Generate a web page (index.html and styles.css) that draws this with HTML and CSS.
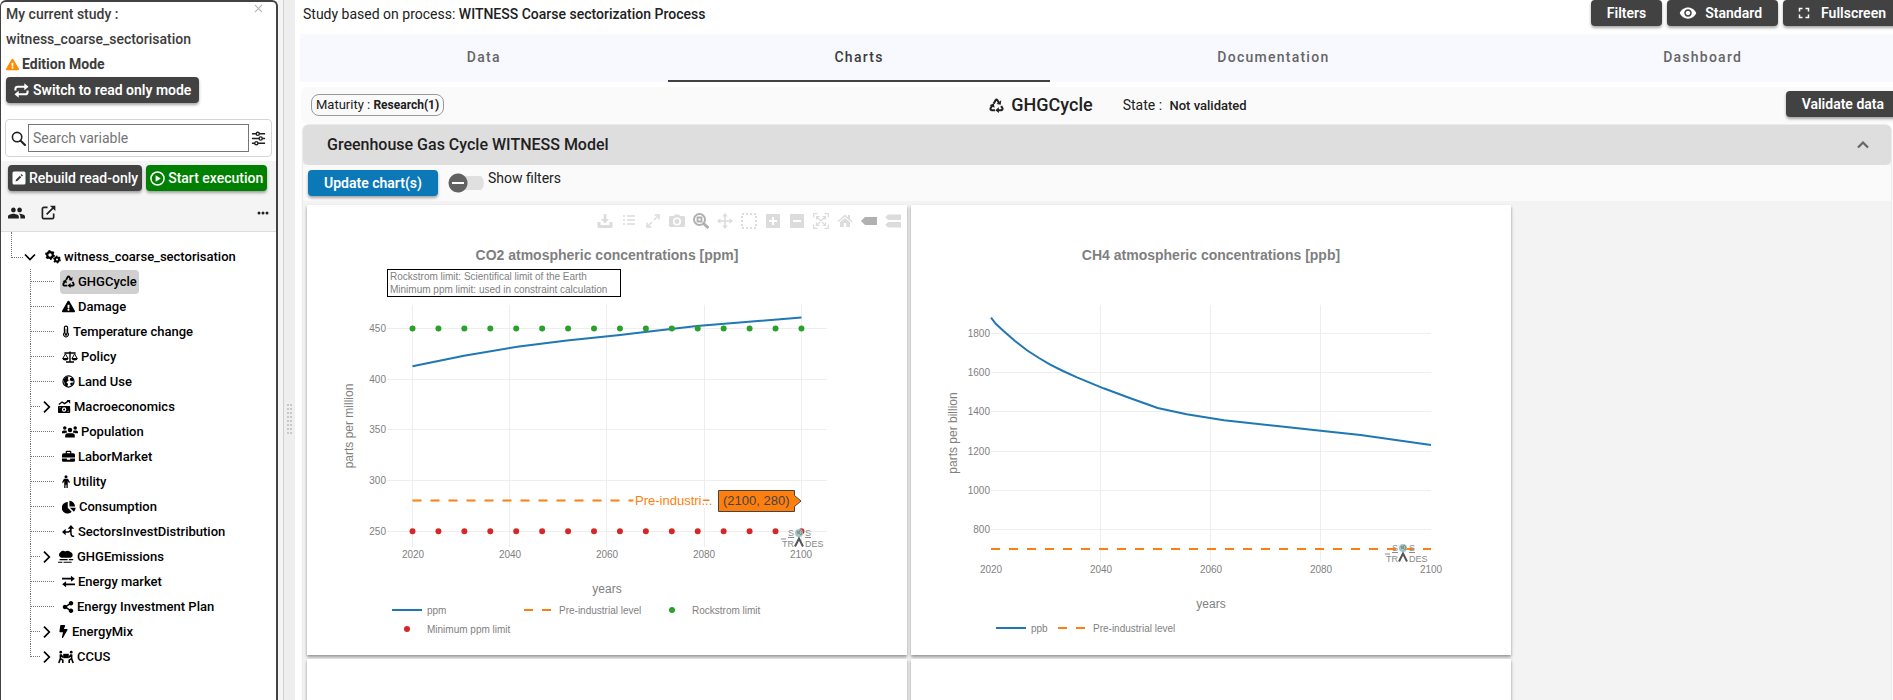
FILE: index.html
```html
<!DOCTYPE html>
<html lang="en">
<head>
<meta charset="utf-8">
<title>WITNESS Coarse sectorization Process</title>
<link rel="stylesheet" href="styles.css">
</head>
<body>
<svg class="defs" aria-hidden="true">
  <symbol id="warn" viewBox="0 0 576 512"><path d="M569.5 440C588 472 564.800 512 527.900 512H48c-36.900 0-60-40-41.500-72L246.400 24c18.500-32 64.700-32 83.200 0l239.900 416zM288 354c-25.400 0-46 20.600-46 46s20.600 46 46 46 46-20.600 46-46-20.600-46-46-46zm-43.700-165.300l7.400 136c.4 6.300 5.700 11.300 12 11.300h48.600c6.400 0 11.600-5 12-11.300l7.400-136c.4-6.900-5.100-12.700-12-12.700h-63.400c-6.900 0-12.400 5.800-12 12.700z"/></symbol>
  <symbol id="repeat" viewBox="0 0 16 16"><path d="M1.500 8V6.500a2.500 2.500 0 0 1 2.500-2.500h8M14.500 8v1.500a2.500 2.500 0 0 1-2.500 2.500H4" fill="none" stroke="currentColor" stroke-width="2.200"/><path d="M11 .2v7.600L15.500 4zM5 15.800V8.200L.5 12z"/></symbol>
  <symbol id="search" viewBox="0 0 16 16"><circle cx="6.500" cy="6.500" r="5" fill="none" stroke="currentColor" stroke-width="1.700"/><path d="M10.300 10.300l4.600 4.600" stroke="currentColor" stroke-width="2.200" stroke-linecap="round"/></symbol>
  <symbol id="sliders" viewBox="0 0 16 16"><g fill="none" stroke="currentColor" stroke-width="1.500"><path d="M1 3h4.500M9 3h6M1 8h7.500M12 8h3M1 13h3M7.500 13H15"/><circle cx="7.200" cy="3" r="1.700"/><circle cx="10.300" cy="8" r="1.700"/><circle cx="5.700" cy="13" r="1.700"/></g></symbol>
  <symbol id="edit" viewBox="0 0 14 14"><path fill-rule="evenodd" d="M2 .5h10A1.500 1.500 0 0 1 13.500 2v10a1.500 1.500 0 0 1-1.500 1.500H2A1.500 1.500 0 0 1 .5 12V2A1.500 1.500 0 0 1 2 .5zM3.500 10.500l2-.500 3.800-3.800-1.500-1.500L4 8.500zM8.500 4l1.500 1.500 1-1L9.500 3z"/></symbol>
  <symbol id="play" viewBox="0 0 16 16"><circle cx="8" cy="8" r="7" fill="none" stroke="currentColor" stroke-width="1.600"/><path d="M6 4.500v7L11.500 8z"/></symbol>
  <symbol id="group" viewBox="1 4 22 16"><path d="M16 11c1.660 0 3-1.340 3-3s-1.340-3-3-3-3 1.340-3 3 1.340 3 3 3zm-8 0c1.660 0 3-1.340 3-3S9.660 5 8 5 5 6.340 5 8s1.340 3 3 3zm0 2c-2.330 0-7 1.170-7 3.500V19h14v-2.500c0-2.330-4.670-3.500-7-3.500zm8 0c-.3 0-.6 0-1 .05 1.200.84 2 1.970 2 3.450V19h6v-2.500c0-2.330-4.670-3.500-7-3.500z"/></symbol>
  <symbol id="open" viewBox="0 0 16 16"><path d="M7 2.500H3A1.500 1.500 0 0 0 1.500 4v9A1.500 1.500 0 0 0 3 14.500h9a1.500 1.500 0 0 0 1.500-1.500V9M6 10l7.500-7.500" fill="none" stroke="currentColor" stroke-width="1.800"/><path d="M9.500.700h5.800v5.800z"/></symbol>
  <symbol id="dots" viewBox="0 0 12 4"><circle cx="2" cy="2" r="1.500"/><circle cx="6" cy="2" r="1.500"/><circle cx="10" cy="2" r="1.500"/></symbol>
  <symbol id="eye" viewBox="0 0 24 24"><path d="M12 4.500C7 4.500 2.730 7.610 1 12c1.730 4.390 6 7.500 11 7.500s9.270-3.110 11-7.500c-1.730-4.390-6-7.500-11-7.500zM12 17c-2.760 0-5-2.240-5-5s2.240-5 5-5 5 2.240 5 5-2.240 5-5 5zm0-8c-1.660 0-3 1.340-3 3s1.340 3 3 3 3-1.340 3-3-1.340-3-3-3z"/></symbol>
  <symbol id="full" viewBox="0 0 24 24"><path d="M7 14H5v5h5v-2H7v-3zm-2-4h2V7h3V5H5v5zm12 7h-3v2h5v-5h-2v3zM14 5v2h3v3h2V5h-5z"/></symbol>
  <symbol id="down" viewBox="0 0 12 12"><path d="M1 3.500l5 5 5-5" fill="none" stroke="currentColor" stroke-width="1.700"/></symbol>
  <symbol id="right" viewBox="0 0 12 12"><path d="M3 .700L8.300 6 3 11.300" fill="none" stroke="currentColor" stroke-width="1.700"/></symbol>
  <symbol id="up" viewBox="0 0 12 12"><path d="M1 8.500l5-5 5 5" fill="none" stroke="currentColor" stroke-width="2.200"/></symbol>
  <symbol id="gears" viewBox="0 0 16 14"><circle cx="5" cy="5" r="2.800" fill="none" stroke="currentColor" stroke-width="2.200"/><circle cx="5" cy="5" r="4.100" fill="none" stroke="currentColor" stroke-width="1.600" stroke-dasharray="2 2.290"/><circle cx="12" cy="9.500" r="2" fill="none" stroke="currentColor" stroke-width="2"/><circle cx="12" cy="9.500" r="3.200" fill="none" stroke="currentColor" stroke-width="1.400" stroke-dasharray="1.700 1.650"/></symbol>
  <symbol id="recycle" viewBox="0 0 16 16"><g fill="none" stroke="currentColor" stroke-width="2.200"><path d="M5 6l2-3.500q1-1.500 2 0L10.500 5"/><path d="M13 8.500l1.300 2.300q.7 1.900-1.300 2.200H9.500"/><path d="M6.500 13H3q-2-.3-1.300-2.200L3.500 8"/></g><path d="M8 6.300l4.500.9.500-4.700zM10.500 9.800V16L6.800 13zM.6 7.800l4.500-2.200.9 4.700z"/></symbol>
  <symbol id="thermo" viewBox="0 0 8 16"><path fill-rule="evenodd" d="M4 .5a2.700 2.700 0 0 1 2.700 2.700v6A3.600 3.600 0 1 1 1.300 9.200v-6A2.700 2.700 0 0 1 4 .5zM4 2a1.200 1.200 0 0 0-1.200 1.200V10a2.200 2.200 0 1 0 2.400 0V3.200A1.200 1.200 0 0 0 4 2z"/><circle cx="4" cy="11.700" r="1.500"/><path d="M3.500 4.500h1V12h-1z"/></symbol>
  <symbol id="balance" viewBox="0 0 20 16"><path d="M3 3h14M10 1v13M5 14.300h10" fill="none" stroke="currentColor" stroke-width="1.700"/><path d="M4.200 4L1 10h6.500zM15.800 4l-3.300 6H19z" fill="none" stroke="currentColor" stroke-width="1.200"/><path d="M.3 9.700h7.800q-.5 2.800-3.900 2.800T.3 9.700zM11.900 9.700h7.800q-.5 2.800-3.900 2.800t-3.900-2.800z"/></symbol>
  <symbol id="globe" viewBox="0 0 16 16"><circle cx="8" cy="8" r="6.800" fill="none" stroke="currentColor" stroke-width="1.500"/><path d="M2 5.500l4-4 2 1.500-1 2 1.500 1.500-3 2.500 2 2-1 3.500-3-2zM10 4l3-.5 1.500 3-2 1.500-3-1.500zM10 10l3-1 .5 2-2.500 2.500z"/></symbol>
  <symbol id="money" viewBox="0 0 16 16"><path d="M1 5.500l4-3 3 2 5-3.500" fill="none" stroke="currentColor" stroke-width="1.700"/><path d="M10.500 0H15v4.500z"/><path fill-rule="evenodd" d="M1 7.500h13q1 0 1 1V15q0 1-1 1H1q-1 0-1-1V8.500q0-1 1-1zM7.500 9a2.700 2.700 0 1 0 0 5.400 2.700 2.700 0 0 0 0-5.400zM2 9v1.500L3.500 9zM13 14.500V13l-1.500 1.500z"/><circle cx="7.500" cy="11.700" r="1.200"/></symbol>
  <symbol id="users" viewBox="0 0 20 16"><circle cx="10" cy="5.500" r="2.800"/><circle cx="3.500" cy="3" r="2.200"/><circle cx="16.500" cy="3" r="2.200"/><path d="M4 15v-2.500q0-3 3-3h6q3 0 3 3V15zM0 9.500V8q0-2 2-2h3.500l1 2.700Q4 9 3.600 9.500zM20 9.500V8q0-2-2-2h-3.500l-1 2.700q2.500.3 2.900.8z"/></symbol>
  <symbol id="toolbox" viewBox="0 0 16 16"><path fill-rule="evenodd" d="M4.500 4V2.500Q4.500 1 6 1h4q1.500 0 1.500 1.500V4H14q2 0 2 2v3.300H0V6q0-2 2-2zM6 4h4V2.500H6zM0 10.500h6V12h4v-1.500h6V13q0 1.500-1.500 1.500h-13Q0 14.500 0 13z"/></symbol>
  <symbol id="person" viewBox="0 0 10 16"><circle cx="5" cy="2" r="1.900"/><path d="M2.500 4.500h5L10 9l-1.300.8-1.500-2.300V16H5.600v-4H4.400v4H2.800V7.500L1.300 9.800 0 9z"/></symbol>
  <symbol id="pie" viewBox="0 0 17 16"><path d="M7 2v7l4.800 4.800A7 7 0 1 1 7 2zM9 .5A7 7 0 0 1 15.800 7.300H9zM9.500 9h7a7 7 0 0 1-2 4.700z"/></symbol>
  <symbol id="branch" viewBox="0 0 16 16"><path d="M3 8.500h5q3-.5 3-5M11 3v7q0 4 4 4" fill="none" stroke="currentColor" stroke-width="1.800"/><path d="M7 4.500L11 0l4 4.500zM4.500 4.500v8L0 8.500z"/></symbol>
  <symbol id="smog" viewBox="0 0 20 16"><path d="M4.500 9A3.700 3.700 0 0 1 3 2.200 4 4 0 0 1 9 1.200a4.500 4.500 0 0 1 6.500.600A3.800 3.800 0 0 1 16 9zM2 10.500h10v1.500H2zM13.500 10.500H19v1.500h-5.500zM0 13.800h5.500v1.500H0zM7 13.800h10v1.500H7z"/></symbol>
  <symbol id="swap" viewBox="0 0 16 16"><path d="M0 4.500h12M4 11.500h12" fill="none" stroke="currentColor" stroke-width="2"/><path d="M11 .8v7.400l4.800-3.700zM5 7.800v7.400L.2 11.500z"/></symbol>
  <symbol id="share" viewBox="0 0 448 512"><path d="M352 320c-22.600 0-43.400 7.800-59.800 20.900l-102.500-64a96.600 96.600 0 0 0 0-41.700l102.500-64.100C308.600 184.200 329.400 192 352 192c53 0 96-43 96-96S405 0 352 0s-96 43-96 96c0 7.200.8 14.100 2.300 20.800l-102.500 64.100C139.400 167.800 118.600 160 96 160c-53 0-96 43-96 96s43 96 96 96c22.600 0 43.400-7.800 59.800-20.900l102.500 64.100A96.300 96.300 0 0 0 256 416c0 53 43 96 96 96s96-43 96-96-43-96-96-96z"/></symbol>
  <symbol id="bolt" viewBox="0 0 320 512"><path d="M296 160H180.600l42.600-129.800C227.200 15 215.700 0 200 0H56C44 0 33.800 8.900 32.200 20.800l-32 240C-1.700 275.200 9.500 288 24 288h118.700L96.600 482.500c-3.600 15.200 8 29.500 23.300 29.500 8.400 0 16.400-4.400 20.800-12l176-304c9.300-15.900-2.200-36-20.700-36z"/></symbol>
  <symbol id="carry" viewBox="0 0 20 16"><circle cx="3.500" cy="2" r="1.700"/><circle cx="16.500" cy="2" r="1.700"/><path d="M6.500 4h7v5.500h-7z"/><path d="M3 4.500V10l-2 5.500M3 10l3 2v3.500M3.500 5l3 3.500M17 4.500V10l2 5.500M17 10l-3 2v3.500M16.500 5l-3 3.500" fill="none" stroke="currentColor" stroke-width="2"/></symbol>
</svg>

<div class="app">
  <aside class="sidebar">
    <section class="study">
      <button class="close" aria-label="Close study"><svg viewBox="0 0 10 10"><path d="M1 1l8 8M9 1L1 9" fill="none" stroke="currentColor" stroke-width="1.300"/></svg></button>
      <p>My current study :</p>
      <p>witness_coarse_sectorisation</p>
      <p class="mode"><svg class="i13 orange"><use href="#warn"/></svg>Edition Mode</p>
      <button class="btn switch"><svg class="i15"><use href="#repeat"/></svg>Switch to read only mode</button>
    </section>
    <div class="search">
      <svg class="i15"><use href="#search"/></svg>
      <input type="text" placeholder="Search variable" aria-label="Search variable">
      <button class="plain" aria-label="Search options"><svg class="i15"><use href="#sliders"/></svg></button>
    </div>
    <section class="tools">
      <div class="run">
        <button class="btn tight"><svg class="i14"><use href="#edit"/></svg>Rebuild read-only</button>
        <button class="btn tight green"><svg class="i15"><use href="#play"/></svg>Start execution</button>
      </div>
      <div class="actions">
        <button class="plain" aria-label="Users"><svg class="i17"><use href="#group"/></svg></button>
        <button class="plain" aria-label="Open in new window"><svg class="i15"><use href="#open"/></svg></button>
        <button class="plain last" aria-label="More"><svg class="more"><use href="#dots"/></svg></button>
      </div>
    </section>
    <nav class="tree" aria-label="Study tree">
      <div class="root"><button class="plain" aria-label="Collapse"><svg class="i12"><use href="#down"/></svg></button><a href="#"><svg class="i16"><use href="#gears"/></svg>witness_coarse_sectorisation</a></div>
      <ul>
        <li><a href="#" class="selected"><svg class="i13"><use href="#recycle"/></svg>GHGCycle</a></li>
        <li><a href="#"><svg class="i13"><use href="#warn"/></svg>Damage</a></li>
        <li><a href="#"><svg class="i8"><use href="#thermo"/></svg>Temperature change</a></li>
        <li><a href="#"><svg class="i16"><use href="#balance"/></svg>Policy</a></li>
        <li><a href="#"><svg class="i13"><use href="#globe"/></svg>Land Use</a></li>
        <li class="node"><button class="plain" aria-label="Expand"><svg class="i12"><use href="#right"/></svg></button><a href="#"><svg class="i13"><use href="#money"/></svg>Macroeconomics</a></li>
        <li><a href="#"><svg class="i16"><use href="#users"/></svg>Population</a></li>
        <li><a href="#"><svg class="i13"><use href="#toolbox"/></svg>LaborMarket</a></li>
        <li><a href="#"><svg class="i8"><use href="#person"/></svg>Utility</a></li>
        <li><a href="#"><svg class="i14"><use href="#pie"/></svg>Consumption</a></li>
        <li><a href="#"><svg class="i13"><use href="#branch"/></svg>SectorsInvestDistribution</a></li>
        <li class="node"><button class="plain" aria-label="Expand"><svg class="i12"><use href="#right"/></svg></button><a href="#"><svg class="i16"><use href="#smog"/></svg>GHGEmissions</a></li>
        <li><a href="#"><svg class="i13"><use href="#swap"/></svg>Energy market</a></li>
        <li><a href="#"><svg class="i12"><use href="#share"/></svg>Energy Investment Plan</a></li>
        <li class="node"><button class="plain" aria-label="Expand"><svg class="i12"><use href="#right"/></svg></button><a href="#"><svg class="i11"><use href="#bolt"/></svg>EnergyMix</a></li>
        <li class="node"><button class="plain" aria-label="Expand"><svg class="i12"><use href="#right"/></svg></button><a href="#"><svg class="i16"><use href="#carry"/></svg>CCUS</a></li>
      </ul>
    </nav>
  </aside>

  <div class="gutter"><div class="grip"></div></div>

  <main>
    <header class="top wide">
      <h1>Study based on process: <strong>WITNESS Coarse sectorization Process</strong></h1>
      <div class="top-buttons">
        <button class="btn roomy">Filters</button>
        <button class="btn icon"><svg class="i18"><use href="#eye"/></svg>Standard</button>
        <button class="btn icon"><svg class="i18"><use href="#full"/></svg>Fullscreen</button>
      </div>
    </header>
    <div class="tabs wide" role="tablist">
      <button role="tab">Data</button>
      <button role="tab" class="active" aria-selected="true">Charts</button>
      <button role="tab">Documentation</button>
      <button role="tab">Dashboard</button>
    </div>
    <div class="status wide">
      <span class="pill">Maturity : <strong>Research(1)</strong></span>
      <div class="name"><h2><svg class="i15"><use href="#recycle"/></svg>GHGCycle</h2><span class="state">State : <strong>Not validated</strong></span></div>
      <button class="btn roomy">Validate data</button>
    </div>
    <section class="panel">
      <div class="panel-head"><h3>Greenhouse Gas Cycle WITNESS Model</h3><button class="plain" aria-label="Collapse panel"><svg class="i12"><use href="#up"/></svg></button></div>
      <div class="panel-bar">
        <button class="btn blue roomy">Update chart(s)</button>
        <label class="toggle"><input type="checkbox">Show filters</label>
      </div>
      <div class="charts">
        <article class="card">
          <div class="modebar">
            <button aria-label="Download data"><svg viewBox="0 0 16 16"><path d="M2 9v4.500h12V9" fill="none" stroke="currentColor" stroke-width="3" stroke-linejoin="round"/><path d="M6.700 1h2.600v5H12l-4 4.500L4 6h2.700z"/></svg></button>
            <button aria-label="Legend"><svg viewBox="0 0 16 16"><path d="M2 3h2M2 7h2M2 11h2M6 3h8M6 7h8M6 11h8" fill="none" stroke="currentColor" stroke-width="1.500"/></svg></button>
            <button aria-label="Expand"><svg viewBox="0 0 16 16"><path d="M9 7l5-5M7 9l-5 5M9.500 2H14v4.500M2 9.500V14h4.500" fill="none" stroke="currentColor" stroke-width="1.500"/></svg></button>
            <button aria-label="Snapshot"><svg viewBox="0 0 16 16"><path fill-rule="evenodd" d="M5 3l1-1.500h4L11 3h3.500Q16 3 16 4.500v8q0 1.500-1.500 1.500h-13Q0 14 0 12.500v-8Q0 3 1.500 3zM8 4.500a4 4 0 1 0 0 8 4 4 0 0 0 0-8z"/><circle cx="8" cy="8.500" r="2.400"/></svg></button>
            <button aria-label="Zoom" class="on"><svg viewBox="0 0 16 16"><circle cx="6.500" cy="6.500" r="5.500" fill="none" stroke="currentColor" stroke-width="2"/><path d="M4.500 4.500h4v4h-4z" fill="none" stroke="currentColor" stroke-width="1.800"/><path d="M10.500 10.500l5 4.500" stroke="currentColor" stroke-width="3"/></svg></button>
            <button aria-label="Pan"><svg viewBox="0 0 16 16"><path d="M8 2v12M2 8h12" stroke="currentColor" stroke-width="1.600"/><path d="M8 0l2.800 3.500H5.200zM8 16l2.800-3.500H5.200zM0 8l3.500-2.800v5.600zM16 8l-3.500-2.800v5.600z"/></svg></button>
            <button aria-label="Box select"><svg viewBox="0 0 16 16"><path d="M1 1h14v14H1z" fill="none" stroke="currentColor" stroke-width="2" stroke-dasharray="2 2"/></svg></button>
            <button aria-label="Zoom in"><svg viewBox="0 0 16 16"><path fill-rule="evenodd" d="M1 1h14v14H1zM7 4v3H4v2h3v3h2V9h3V7H9V4z"/></svg></button>
            <button aria-label="Zoom out"><svg viewBox="0 0 16 16"><path fill-rule="evenodd" d="M1 1h14v14H1zM4 7v2h8V7z"/></svg></button>
            <button aria-label="Autoscale"><svg viewBox="0 0 16 16"><path d="M.7 4.500V.7h3.800M11.500.7h3.800v3.800M15.300 11.500v3.800h-3.800M4.500 15.300H.7v-3.800M4 4l8 8M12 4l-8 8M3.500 6.500v-3h3M9.500 3.500h3v3M12.500 9.500v3h-3M6.500 12.500h-3v-3" fill="none" stroke="currentColor" stroke-width="1.200"/></svg></button>
            <button aria-label="Reset axes"><svg viewBox="0 0 16 16"><path d="M8 1.500l3 2.700V2h2v4l2.500 2.200-1 1L8 3.500 1.500 9.200l-1-1zM8 5l5 4.300V14H9.300v-4H6.700v4H3V9.300z"/></svg></button>
            <button aria-label="Closest data" class="on"><svg viewBox="0 0 16 16"><path d="M4 4h12v8H4L0 8z"/></svg></button>
            <button aria-label="Compare data"><svg viewBox="0 0 16 16"><path d="M3 1.500h13v5.500H3L.3 4.200zM3 9h13v5.500H3L.3 11.800z"/></svg></button>
          </div>
          <svg class="plot" viewBox="0 0 600 450" role="img" aria-label="CO2 atmospheric concentrations">
            <text class="title" x="300" y="55">CO2 atmospheric concentrations [ppm]</text>
            <rect x="80.500" y="64.500" width="233" height="27" fill="#fff" stroke="#000"/>
            <text x="83" y="75">Rockstrom limit: Scientifical limit of the Earth</text>
            <text x="83" y="88">Minimum ppm limit: used in constraint calculation</text>
            <path class="grid" d="M105.500 100v242M202.500 100v242M299.500 100v242M397.500 100v242M494.500 100v242M80 123.500h440M80 174.500h440M80 224.500h440M80 275.500h440M80 326.500h440"/>
            <g class="yt"><text x="79" y="127">450</text><text x="79" y="178">400</text><text x="79" y="228">350</text><text x="79" y="279">300</text><text x="79" y="330">250</text></g>
            <g class="xt"><text x="106" y="353">2020</text><text x="203" y="353">2040</text><text x="300" y="353">2060</text><text x="397" y="353">2080</text><text x="494" y="353">2100</text><text class="axis" x="300" y="388">years</text><text class="axis" transform="translate(46 221) rotate(-90)">parts per million</text></g>
            <path class="blue-line" d="M105.500 161.300L157 150.700 212 141.500 260 135.500 313 130 338 127 390 121 494.500 112.500"/>
            <path class="orange-line" d="M105.500 295.500H494.500"/>
            <path class="dot-line green-dots" d="M105.500 123.500H495"/>
            <path class="dot-line red-dots" d="M105.500 326.300H495"/>
            <text class="hover-name" x="328" y="300">Pre-industri...</text>
            <path d="M411.500 285.500h76v5l6.500 5.500-6.500 5.500v5h-76z" fill="#ff7f0e" stroke="#444"/>
            <text class="hover-value" x="416" y="300">(2100, 280)</text>
            <g class="logo" transform="translate(474 323)"><circle cx="18" cy="5" r="4"/><path class="lines" d="M16 3l2 1-1 2zM19 2l2 2-1 3-2-2zM7 9.500h6M24 9.500h6M0 11h5"/><path class="mast" d="M14 18.500l4-8 4 8"/><text x="7" y="8">S</text><text x="24" y="8">S</text><text x="1" y="19">TR</text><text x="24" y="19">DES</text></g>
            <path class="blue-line" d="M85 405h30"/><path class="orange-line" d="M217 405h30"/><circle cx="365" cy="405" r="3" fill="#2ca02c"/><circle cx="100" cy="424" r="3" fill="#d62728"/>
            <text x="120" y="409">ppm</text><text x="252" y="409">Pre-industrial level</text><text x="385" y="409">Rockstrom limit</text><text x="120" y="428">Minimum ppm limit</text>
          </svg>
        </article>
        <article class="card">
          <svg class="plot" viewBox="0 0 600 450" role="img" aria-label="CH4 atmospheric concentrations">
            <text class="title" x="300" y="55">CH4 atmospheric concentrations [ppb]</text>
            <path class="grid" d="M189.500 100v257M299.500 100v257M409.500 100v257M80 128.500h440M80 167.500h440M80 206.500h440M80 246.500h440M80 285.500h440M80 324.500h440"/>
            <g class="yt"><text x="79" y="132">1800</text><text x="79" y="171">1600</text><text x="79" y="210">1400</text><text x="79" y="250">1200</text><text x="79" y="289">1000</text><text x="79" y="328">800</text></g>
            <g class="xt"><text x="80" y="368">2020</text><text x="190" y="368">2040</text><text x="300" y="368">2060</text><text x="410" y="368">2080</text><text x="520" y="368">2100</text><text class="axis" x="300" y="403">years</text><text class="axis" transform="translate(46 228) rotate(-90)">parts per billion</text></g>
            <path class="blue-line" d="M80 112.700L85 119 92.600 126 104 136 116.300 145.500 128 153 139.200 159.600 152 166 166 172.300 192.600 183.300 218 192.700 246.700 203 275.600 209.300 313 215.300 368.400 221.300 412 226 449.500 230 520 240"/>
            <path class="orange-line" d="M80 344H520"/>
            <g class="logo" transform="translate(474 338)"><circle cx="18" cy="5" r="4"/><path class="lines" d="M16 3l2 1-1 2zM19 2l2 2-1 3-2-2zM7 9.500h6M24 9.500h6M0 11h5"/><path class="mast" d="M14 18.500l4-8 4 8"/><text x="7" y="8">S</text><text x="24" y="8">S</text><text x="1" y="19">TR</text><text x="24" y="19">DES</text></g>
            <path class="blue-line" d="M85 423h30"/><path class="orange-line" d="M147 423h30"/>
            <text x="120" y="427">ppb</text><text x="182" y="427">Pre-industrial level</text>
          </svg>
        </article>
        <article class="card"></article>
        <article class="card"></article>
      </div>
    </section>
  </main>
</div>
</body>
</html>
```
FILE: styles.css
```css
* { box-sizing: border-box; }
body { margin: 0; font: 14px/20px Roboto, "Liberation Sans", sans-serif; color: #212121; background: #fff; }
h1, h2, h3, p, ul { margin: 0; padding: 0; font-size: inherit; font-weight: inherit; }
button, input { font: inherit; }
button { border: 0; cursor: pointer; }
strong { font-weight: 500; }
svg { display: block; flex: none; fill: currentColor; }
.defs { position: absolute; width: 0; height: 0; }

.i8 { width: 8px; height: 13px; }
.i11 { width: 11px; height: 13px; }
.i12 { width: 12px; height: 12px; }
.i13 { width: 13px; height: 13px; }
.i14 { width: 14px; height: 14px; }
.i15 { width: 15px; height: 15px; }
.i16 { width: 16px; height: 14px; }
.i17 { width: 17px; height: 14px; }
.i18 { width: 18px; height: 18px; }
.more { width: 12px; height: 4px; }
.orange { color: #ff8c00; }

.app { display: grid; grid-template-columns: 278px 17px minmax(0, 1fr); height: 100vh; overflow: hidden; }

.btn { display: flex; align-items: center; gap: 4px; height: 26px; padding: 0 8px; border-radius: 4px; background: #424242; color: #fff; font-weight: 600; line-height: 24px; white-space: nowrap; box-shadow: 0 2px 3px rgba(0, 0, 0, .35); }
.btn.roomy { padding: 0 16px; }
.btn.icon { padding: 0 16px 0 12px; gap: 8px; }
.btn.tight { padding: 0 4px; gap: 3px; font-weight: 500; }
.btn.green { background: #008000; }
.btn.blue { background: #0b78b8; }
.plain { display: flex; padding: 0; background: none; color: inherit; }

.sidebar { border: 2px solid #424242; border-width: 2px 2px 0 1px; border-radius: 6px 6px 0 0; overflow: hidden; background: #fff; color: #000; font-size: 13px; font-weight: 500; }
.study { position: relative; padding: 0 5px; color: #3c3c3c; font-size: 14px; }
.study p { height: 25px; line-height: 25px; }
.study .mode { display: flex; align-items: center; gap: 3px; font-weight: 700; }
.close { position: absolute; top: 1px; right: 12px; width: 11px; height: 11px; padding: 1px; background: none; color: #b5b5b5; }
.search { display: flex; align-items: center; gap: 1px; height: 38px; margin: 16px 4px 4px; padding: 0 5px; border: 1px solid #d5d5d5; border-radius: 4px; color: #212121; }
.search input { flex: 1; min-width: 0; height: 28px; margin: 0 1px; padding: 0 4px; border: 1px solid #767676; font-size: 14px; font-weight: 400; }
.search input::placeholder { color: #757575; }
.tools { padding: 4px 7px 0; height: 71px; background: #f4f4f4; border-bottom: 1px solid #dcdcdc; color: #212121; font-size: 14px; }
.run { display: flex; gap: 4px; }
.actions { display: flex; align-items: center; gap: 16px; height: 43px; }
.actions .last { margin-left: auto; }

.tree a { display: flex; align-items: center; gap: 3px; height: 24px; padding: 0 2px; border-radius: 4px; color: #000; text-decoration: none; }
.tree .selected { background: #d0d0d0; }
.root { display: flex; align-items: center; height: 25px; margin-top: 12px; padding-left: 23px; gap: 7px; position: relative; }
.root::before { content: ""; position: absolute; left: 10px; top: -12px; width: 11px; height: 25px; border: 1px dotted #777; border-width: 0 0 1px 1px; }
.tree ul { list-style: none; margin-left: 29px; }
.tree li { display: flex; align-items: center; height: 25px; padding-left: 30px; position: relative; }
.tree li.node { padding-left: 11px; gap: 3px; }
.tree li::before { content: ""; position: absolute; left: 0; top: 0; height: 100%; border-left: 1px dotted #777; }
.tree li:last-child::before { height: 13px; }
.tree li::after { content: ""; position: absolute; left: 0; top: 12px; width: 24px; border-top: 1px dotted #777; }
.tree li.node::after { width: 10px; }

.gutter { display: flex; align-items: center; justify-content: flex-end; padding: 138px 3px 0 0; background: linear-gradient(90deg, #f4f4f4 5px, #d0d0d0 5px, #d0d0d0 6px, #eee 6px); }
.grip { width: 5px; height: 30px; background: repeating-linear-gradient(transparent 0 2px, #eee 2px 4px), linear-gradient(90deg, #c8c8c8 2px, transparent 2px 3px, #c8c8c8 3px); }

main { display: flex; flex-direction: column; min-width: 0; padding-left: 5px; overflow: hidden; }
.wide { width: calc(100% + 16px); flex: none; }
.top { display: flex; justify-content: space-between; align-items: flex-start; height: 34px; padding: 0 7px 0 3px; }
.top h1 { padding-top: 4px; }
.top-buttons { display: flex; gap: 5px; }
.tabs { display: flex; height: 48px; background: #f8f9ff; }
.tabs button { flex: 1 0 auto; padding: 0 24px; background: none; border-bottom: 2px solid transparent; color: #666; font-weight: 500; letter-spacing: 1.25px; }
.tabs .active { color: #3c3c3c; border-bottom-color: #424242; }
.status { display: flex; align-items: center; justify-content: space-between; height: 36px; margin: 5px 0 2px 1px; padding: 0 10px 0 10px; background: #fafafa; border-radius: 6px; }
.status .btn { margin-bottom: 2px; }
.pill { padding: 0 4px; border: 1px solid #999; border-radius: 8px; font-size: 13px; line-height: 20px; }
.pill strong { font-size: 12px; font-weight: 700; }
.name { display: flex; align-items: center; gap: 30px; padding-left: 6px; }
.name h2 { display: flex; align-items: center; gap: 7px; font-size: 18px; font-weight: 500; }
.state strong { margin-left: 4px; font-size: 13px; }
.panel { flex: 1; margin: 0 2px 0 3px; background: #f3f3f3; box-shadow: 0 0 2px rgba(0, 0, 0, .3); border-radius: 6px 6px 0 0; }
.panel-head { display: flex; align-items: center; justify-content: space-between; height: 40px; padding: 0 22px 0 24px; background: #dedede; border-radius: 5px; font-size: 16px; font-weight: 500; }
.panel-head button { color: #666; }
.panel-bar { display: flex; align-items: center; gap: 10px; height: 36px; padding: 0 5px; background: #fafafa; }
.toggle { display: flex; align-items: flex-start; gap: 4px; height: 30px; }
.toggle input { appearance: none; width: 36px; height: 20px; margin: 5px 0 0; border-radius: 10px; background: linear-gradient(#fff, #fff) 4px 9px / 12px 2px no-repeat, radial-gradient(circle at 10px 10px, #616161 9px, transparent 10px), linear-gradient(#e0e0e0, #e0e0e0) 10px 3px / 26px 14px no-repeat; }
.charts { display: grid; grid-template-columns: repeat(auto-fill, 600px); justify-content: start; gap: 4px; padding: 4px; }
.card { position: relative; height: 450px; background: #fff; box-shadow: 0 2px 3px rgba(0, 0, 0, .4); }
.modebar { position: absolute; top: 8px; right: 2px; display: flex; }
.modebar button { width: 24px; height: 16px; padding: 0 4px; background: none; color: #dcdcdc; }
.modebar .on { color: #b0b0b0; }
.plot { width: 100%; height: 100%; fill: #7f7f7f; font: 10px "Liberation Sans", Arial, sans-serif; }
.title { font-size: 14px; font-weight: 700; text-anchor: middle; }
.grid { stroke: #eee; }
.yt { text-anchor: end; }
.xt { text-anchor: middle; }
.axis { font-size: 12px; }
.blue-line, .orange-line, .dot-line { fill: none; stroke-width: 2; }
.blue-line { stroke: #1f77b4; }
.orange-line { stroke: #ff7f0e; stroke-dasharray: 9 9; }
.dot-line { stroke-width: 6; stroke-linecap: round; stroke-dasharray: 0 25.930; }
.green-dots { stroke: #2ca02c; }
.red-dots { stroke: #d62728; }
.hover-name, .hover-value { font-size: 13px; }
.hover-name { fill: #ff7f0e; stroke: #fff; stroke-width: 5; paint-order: stroke; }
.hover-value { fill: #444; }
.logo { font-size: 9px; fill: #8a8a8a; }
.logo circle { fill: #9cc9c6; }
.logo path { fill: none; stroke: #8a8a8a; }
.logo .mast { stroke: #555; stroke-width: 2; }
```
